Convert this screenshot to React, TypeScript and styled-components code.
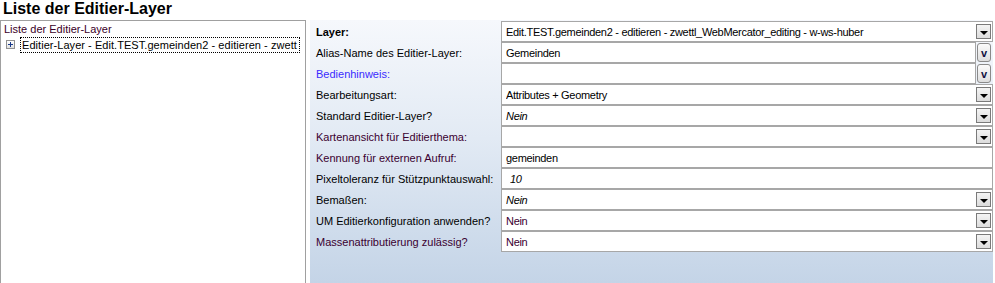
import React from 'react';
import styled, { createGlobalStyle } from 'styled-components';

const GlobalStyle = createGlobalStyle`
  html, body {
    margin: 0;
    padding: 0;
    background: #ffffff;
  }
  body {
    font-family: "Liberation Sans", Arial, sans-serif;
    font-size: 11px;
    color: #000;
  }
`;

const Page = styled.div`
  width: 995px;
  height: 283px;
  display: flex;
  flex-direction: column;
  overflow: hidden;
`;

const Title = styled.h1`
  margin: 0;
  padding: 0 0 0 3px;
  height: 20px;
  line-height: 18px;
  font-size: 16px;
  font-weight: bold;
  color: #000;
`;

const Body = styled.div`
  flex: 1;
  display: flex;
  gap: 4px;
  min-height: 0;
`;

const TreePanel = styled.div`
  width: 306px;
  box-sizing: border-box;
  border: 1px solid #a0a0a0;
  border-bottom: none;
  padding: 1px 1px 1px 2px;
  overflow: hidden;
`;

const TreeCaption = styled.div`
  color: #3a0028;
  height: 14px;
  line-height: 14px;
  padding-left: 1px;
  font-size: 11px;
`;

const TreeItem = styled.div`
  display: flex;
  align-items: center;
  height: 17px;
  white-space: nowrap;
  font-size: 11px;
  letter-spacing: 0.05px;
`;

const Expander = styled.span`
  width: 7px;
  height: 7px;
  border: 1px solid #919191;
  background: linear-gradient(#ffffff, #e0e0e0);
  margin: 0 5px 0 3px;
  position: relative;
  flex-shrink: 0;
  &::before {
    content: '';
    position: absolute;
    left: 1px;
    top: 3px;
    width: 5px;
    height: 1px;
    background: #1a3a8a;
  }
  &::after {
    content: '';
    position: absolute;
    left: 3px;
    top: 1px;
    width: 1px;
    height: 5px;
    background: #1a3a8a;
  }
`;

const ItemLabel = styled.span`
  flex: 0 1 auto;
  min-width: 0;
  border: 1px dotted #000;
  padding: 0 2px 0 1px;
  line-height: 14px;
  overflow: hidden;
`;

const FormPanel = styled.div`
  flex: 1;
  margin-right: 2px;
  background: linear-gradient(180deg, #f6f8fc 0%, #e2eaf4 45%, #c4d4e7 100%);
  padding: 1px 0 0 6px;
  display: grid;
  grid-template-columns: 185px 1fr;
  grid-auto-rows: 21px;
  align-content: start;
`;

const Label = styled.div<{ $tone?: 'bold' | 'blue' | 'dark' }>`
  display: flex;
  align-items: center;
  white-space: nowrap;
  font-size: 11px;
  font-weight: ${p => (p.$tone === 'bold' ? 'bold' : 'normal')};
  color: ${p => (p.$tone === 'blue' ? '#3a2bff' : p.$tone === 'dark' ? '#3a0030' : '#000')};
`;

const FieldRow = styled.div`
  display: flex;
  align-items: stretch;
  min-width: 0;
`;

const Field = styled.div<{ $italic?: boolean; $indent?: number }>`
  flex: 1;
  min-width: 0;
  box-sizing: border-box;
  border: 1px solid #a7a7a7;
  background: #fff;
  display: flex;
  align-items: center;
  padding-left: ${p => p.$indent ?? 4}px;
  padding-right: 1px;
  font-style: ${p => (p.$italic ? 'italic' : 'normal')};
  white-space: nowrap;
  overflow: hidden;
`;

const FieldText = styled.span<{ $dark?: boolean }>`
  flex: 1;
  overflow: hidden;
  letter-spacing: -0.3px;
  color: ${p => (p.$dark ? '#3a0030' : '#000')};
`;

const DropButton = styled.span`
  width: 15px;
  height: 15px;
  box-sizing: border-box;
  border: 1px solid #7a7a7a;
  background: linear-gradient(#f4f4f4, #dcdcdc);
  display: flex;
  align-items: center;
  justify-content: center;
  flex-shrink: 0;
  &::after {
    content: '';
    border-left: 4px solid transparent;
    border-right: 4px solid transparent;
    border-top: 4px solid #000;
    margin-top: 2px;
  }
`;

const MoreButton = styled.span`
  width: 14px;
  margin: 1px 2px 0 1px;
  height: 19px;
  box-sizing: border-box;
  border: 1px solid #8a8a8a;
  border-radius: 3px;
  background: linear-gradient(#fbfbfb, #dedede);
  display: flex;
  align-items: center;
  justify-content: center;
  font-weight: bold;
  font-size: 11px;
  color: #101040;
  flex-shrink: 0;
`;

type Row = {
  label: string;
  tone?: 'bold' | 'blue' | 'dark';
  value?: string;
  italic?: boolean;
  kind: 'drop' | 'more' | 'text';
  dark?: boolean;
  indent?: number;
};

const rows: Row[] = [
  { label: 'Layer:', tone: 'bold', value: 'Edit.TEST.gemeinden2 - editieren - zwettl_WebMercator_editing - w-ws-huber', kind: 'drop' },
  { label: 'Alias-Name des Editier-Layer:', value: 'Gemeinden', kind: 'more' },
  { label: 'Bedienhinweis:', tone: 'blue', value: '', kind: 'more' },
  { label: 'Bearbeitungsart:', value: 'Attributes + Geometry', kind: 'drop' },
  { label: 'Standard Editier-Layer?', value: 'Nein', italic: true, kind: 'drop' },
  { label: 'Kartenansicht für Editierthema:', tone: 'dark', value: '', kind: 'drop' },
  { label: 'Kennung für externen Aufruf:', tone: 'dark', value: 'gemeinden', kind: 'text' },
  { label: 'Pixeltoleranz für Stützpunktauswahl:', value: '10', italic: true, kind: 'text', indent: 8 },
  { label: 'Bemaßen:', value: 'Nein', italic: true, kind: 'drop' },
  { label: 'UM Editierkonfiguration anwenden?', value: 'Nein', kind: 'drop', dark: true },
  { label: 'Massenattributierung zulässig?', tone: 'dark', value: 'Nein', kind: 'drop', dark: true },
];

export default function App() {
  return (
    <Page>
      <GlobalStyle />
      <Title>Liste der Editier-Layer</Title>
      <Body>
        <TreePanel>
          <TreeCaption>Liste der Editier-Layer</TreeCaption>
          <TreeItem>
            <Expander />
            <ItemLabel>Editier-Layer - Edit.TEST.gemeinden2 - editieren - zwett</ItemLabel>
          </TreeItem>
        </TreePanel>
        <FormPanel>
          {rows.map(r => (
            <React.Fragment key={r.label}>
              <Label $tone={r.tone}>{r.label}</Label>
              <FieldRow>
                <Field $italic={r.italic} $indent={r.indent}>
                  <FieldText $dark={r.dark}>{r.value}</FieldText>
                  {r.kind === 'drop' && <DropButton />}
                </Field>
                {r.kind === 'more' && <MoreButton>v</MoreButton>}
              </FieldRow>
            </React.Fragment>
          ))}
        </FormPanel>
      </Body>
    </Page>
  );
}
